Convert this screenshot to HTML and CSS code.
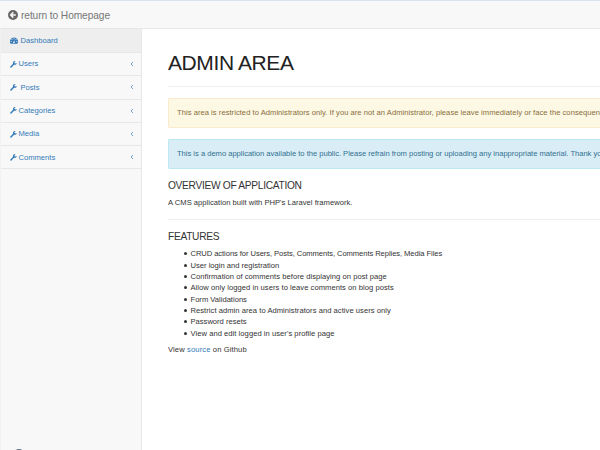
FILE: index.html
```html
<!DOCTYPE html>
<html lang="en">
<head>
<meta charset="utf-8">
<title>Admin Area</title>
<link rel="stylesheet" href="styles.css">
</head>
<body>
<svg class="defs" aria-hidden="true">
  <symbol id="wrench" viewBox="0 0 16 16"><path d="M15.4 4.3c0 2.5-2 4.5-4.400 4.500-.6 0-1.100-.1-1.600-.3L3.300 14.800a1.700 1.700 0 0 1-2.400-2.400L7 6.200A4.400 4.400 0 0 1 13.200.800L10.300 2.500v2.200l2 1.100z"/></symbol>
  <symbol id="chevron" viewBox="0 0 6 8"><path d="M4.500 1 1.500 4l3 3" fill="none" stroke="currentColor" stroke-width="1"/></symbol>
</svg>
<header class="navbar">
  <a class="brand"><svg class="back" viewBox="0 0 16 16"><circle cx="8" cy="8" r="8"/><path d="M8.500 3.800 4.300 8l4.200 4.200M4.500 8h8" fill="none" stroke="#f8f8f8" stroke-width="2.300"/></svg><span>return to Homepage</span></a>
</header>
<div class="layout">
  <nav class="sidebar">
    <a class="item active"><svg class="dash" viewBox="0 0 16 14"><path fill-rule="evenodd" d="M8 1a8 8 0 0 0-6.700 12.400h13.400A8 8 0 0 0 8 1zM8 2.200a1 1 0 1 1 0 2.100 1 1 0 0 1 0-2.100zM4 4a1 1 0 1 1 0 2.100A1 1 0 0 1 4 4zm8 0a1 1 0 1 1 0 2.100A1 1 0 0 1 12 4zM2.500 8a1 1 0 1 1 0 2.100 1 1 0 0 1 0-2.100zm11 0a1 1 0 1 1 0 2.100 1 1 0 0 1 0-2.100zM9.500 5.500 8.800 9a1.700 1.700 0 1 1-1.200-.200z"/></svg><span>Dashboard</span></a>
    <a class="item"><svg class="wrench"><use href="#wrench"/></svg><span>Users</span><svg class="chevron"><use href="#chevron"/></svg></a>
    <a class="item"><svg class="wrench"><use href="#wrench"/></svg><span class="spaced">Posts</span><svg class="chevron"><use href="#chevron"/></svg></a>
    <a class="item"><svg class="wrench"><use href="#wrench"/></svg><span>Categories</span><svg class="chevron"><use href="#chevron"/></svg></a>
    <a class="item"><svg class="wrench"><use href="#wrench"/></svg><span>Media</span><svg class="chevron"><use href="#chevron"/></svg></a>
    <a class="item"><svg class="wrench"><use href="#wrench"/></svg><span>Comments</span><svg class="chevron"><use href="#chevron"/></svg></a>
    <span class="badge"></span>
  </nav>
  <main class="content">
    <h1>ADMIN AREA</h1>
    <div class="alert warning"><span>This area is restricted to Administrators only. If you are not an Administrator, please leave immediately or face the consequences.</span></div>
    <div class="alert info"><span>This is a demo application available to the public. Please refrain from posting or uploading any inappropriate material. Thank you.</span></div>
    <h4 class="overview">OVERVIEW OF APPLICATION</h4>
    <p class="summary">A CMS application built with PHP's Laravel framework.</p>
    <hr>
    <h4 class="features">FEATURES</h4>
    <ul>
      <li class="tight">CRUD actions for Users, Posts, Comments, Comments Replies, Media Files</li>
      <li>User login and registration</li>
      <li class="loose">Confirmation of comments before displaying on post page</li>
      <li class="loose">Allow only logged in users to leave comments on blog posts</li>
      <li>Form Validations</li>
      <li class="loose">Restrict admin area to Administrators and active users only</li>
      <li>Password resets</li>
      <li class="loose">View and edit logged in user's profile page</li>
    </ul>
    <p class="source">View <a class="link">source</a> on Github</p>
  </main>
</div>
</body>
</html>
```

FILE: styles.css
```css
* { box-sizing: border-box; }
html, body { height: 100%; }
body {
  margin: 0;
  overflow: hidden;
  display: flex;
  flex-direction: column;
  background: #fff;
  color: #333;
  font: 7.6px/11.33px "Liberation Sans", Arial, sans-serif;
}
svg { fill: currentColor; flex: none; }
.defs { position: absolute; width: 0; height: 0; }
.navbar {
  flex: none;
  height: 29px;
  padding: 1px 0 0 8px;
  background: #f8f8f8;
  border-top: 1px solid #d9e2ee;
  border-bottom: 1px solid #e7e7e7;
}
.brand {
  display: flex;
  align-items: center;
  height: 26.5px;
  gap: 3px;
  color: #777;
  font-size: 10.2px;
  letter-spacing: -0.09px;
}
.back { width: 10px; height: 10px; color: #666; }
.layout { display: flex; flex: 1; min-height: 0; }
.sidebar {
  position: relative;
  flex: none;
  width: 142px;
  background: #f8f8f8;
  border-right: 1px solid #e7e7e7;
  border-left: 1px solid #f0f2f4;
}
.item {
  display: flex;
  align-items: center;
  height: 23.3px;
  padding: 0 7px 0 9px;
  border-bottom: 1px solid #e7e7e7;
  color: #337ab7;
}
.active { height: 24px; background: #eee; }
.dash { width: 8px; height: 7px; margin-right: 2.5px; }
.wrench { width: 7px; height: 7px; margin-right: 1.5px; }
.spaced { margin-left: 2px; }
.chevron { width: 4px; height: 6px; margin-left: auto; }
.badge {
  position: absolute;
  left: 12px;
  bottom: -11px;
  width: 12px;
  height: 12px;
  border-radius: 50%;
  background: #5c7184;
}
.content { flex: 1; min-width: 0; padding-left: 26px; }
h1, h4 { margin: 0; font-weight: 400; }
h1 {
  height: 58px;
  padding-top: 22px;
  border-bottom: 1px solid #eee;
  color: #222;
  font-size: 21px;
  letter-spacing: -0.4px;
  line-height: 24px;
}
.alert {
  height: 30px;
  padding: 0 8px;
  overflow: hidden;
  border: 1px solid;
  border-right: 0;
  border-radius: 2px 0 0 2px;
  line-height: 28px;
  white-space: nowrap;
  letter-spacing: 0.035px;
}
.warning { margin-top: 11px; background: #fcf8e3; border-color: #faebcc; color: #8a6d3b; }
.info { margin-top: 11px; background: #d9edf7; border-color: #bce8f1; color: #31708f; letter-spacing: -0.02px; }
h4 { font-size: 10.2px; line-height: 12px; letter-spacing: -0.3px; }
.overview { margin: 11px 0 5px; }
p { margin: 0; }
.summary { letter-spacing: 0.02px; }
hr { height: 1px; margin: 11px 0; border: 0; background: #eee; }
.features { margin-bottom: 5px; }
ul { margin: 0 0 5.5px; padding-left: 15.5px; list-style: none; }
li { display: flex; align-items: center; }
li::before {
  content: "";
  width: 3px;
  height: 3px;
  margin-right: 4px;
  border-radius: 50%;
  background: #333;
}
.tight { letter-spacing: -0.07px; }
.loose { letter-spacing: 0.04px; }
.source { letter-spacing: 0.12px; }
.link { color: #337ab7; }
```
